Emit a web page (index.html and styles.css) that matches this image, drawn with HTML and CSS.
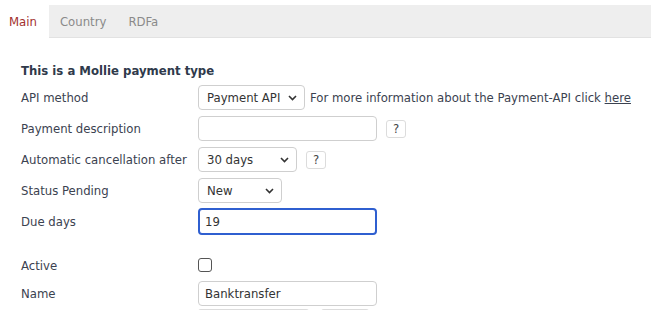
FILE: index.html
```html
<!DOCTYPE html>
<html lang="en">
<head>
  <meta charset="UTF-8" />
  <title>Payment type</title>
  <link rel="stylesheet" href="styles.css">
</head>
<body>

  <ul class="tabs">
    <li class="tab active">Main</li>
    <li class="tab">Country</li>
    <li class="tab">RDFa</li>
  </ul>

  <form class="form">
    <h4>This is a Mollie payment type</h4>

    <div class="row">
      <label>API method</label>
      <div class="field">
        <span class="select w-api">Payment API
          <svg class="chev" width="9" height="6" viewBox="0 0 9 6"><path d="M1 1l3.5 3.5L8 1" fill="none" stroke="#333" stroke-width="1.6"/></svg>
        </span>
        <span class="note">For more information about the Payment-API click <a href="#">here</a></span>
      </div>
    </div>

    <div class="row">
      <label>Payment description</label>
      <div class="field">
        <input class="text" type="text" value="">
        <button type="button" class="help">?</button>
      </div>
    </div>

    <div class="row">
      <label>Automatic cancellation after</label>
      <div class="field">
        <span class="select w-days">30 days
          <svg class="chev" width="9" height="6" viewBox="0 0 9 6"><path d="M1 1l3.5 3.5L8 1" fill="none" stroke="#333" stroke-width="1.6"/></svg>
        </span>
        <button type="button" class="help">?</button>
      </div>
    </div>

    <div class="row">
      <label>Status Pending</label>
      <div class="field">
        <span class="select w-new">New
          <svg class="chev" width="9" height="6" viewBox="0 0 9 6"><path d="M1 1l3.5 3.5L8 1" fill="none" stroke="#333" stroke-width="1.6"/></svg>
        </span>
      </div>
    </div>

    <div class="row">
      <label>Due days</label>
      <div class="field">
        <input class="text focus" type="text" value="19">
      </div>
    </div>

    <div class="row gap">
      <label>Active</label>
      <div class="field">
        <span class="check"></span>
      </div>
    </div>

    <div class="row">
      <label>Name</label>
      <div class="field">
        <input class="text" type="text" value="Banktransfer">
      </div>
    </div>

    <div class="row last">
      <label></label>
      <div class="field">
        <span class="stub"></span>
        <span class="stub short"></span>
      </div>
    </div>
  </form>

</body>
</html>
```

FILE: styles.css
```css
html, body {
  height: 310px;
}

body {
  margin: 0;
  font-family: "DejaVu Sans Condensed", "DejaVu Sans", sans-serif;
  font-size: 13px;
  color: #3b4250;
  background: #fff;
  overflow: hidden;
}

.tabs {
  list-style: none;
  margin: 5px 0 0;
  padding: 0;
  display: flex;
  height: 32px;
  background: #eeeeee;
  border-bottom: 1px solid #e2e2e2;
}

.tab {
  padding: 0 11px;
  line-height: 34px;
  color: #8a8a8a;
}

.tab.active {
  background: #fff;
  color: #a2302e;
  padding: 0 12px 0 9px;
  margin-bottom: -1px;
}

.form {
  padding: 0 0 0 21px;
  margin-top: 25px;
}

h4 {
  margin: 0 0 4px;
  font-size: 13px;
  font-weight: bold;
  color: #2f3a4b;
  line-height: 15px;
}

.row {
  display: flex;
  align-items: center;
  height: 31px;
}

.row.gap {
  margin-top: 15px;
  height: 26px;
}

label {
  width: 177px;
  flex: none;
}

.field {
  display: flex;
  align-items: center;
}

.select {
  position: relative;
  box-sizing: border-box;
  height: 25px;
  line-height: 23px;
  padding: 0 0 0 8px;
  border: 1px solid #cfcfcf;
  border-radius: 4px;
  background: #fff;
  color: #333;
}

.chev {
  position: absolute;
  right: 7px;
  top: 9px;
}

.w-api { width: 107px; }
.w-days { width: 99px; }
.w-new { width: 84px; }

.note {
  margin-left: 5px;
  color: #3b4250;
}

.note a {
  color: #3b4250;
}

.text {
  box-sizing: border-box;
  width: 179px;
  height: 25px;
  margin: 0;
  padding: 0 6px;
  border: 1px solid #cfcfcf;
  border-radius: 4px;
  font: inherit;
  color: #333;
  outline: none;
}

.text.focus {
  border: 2px solid #2f5fd0;
  height: 27px;
  padding: 0 5px;
}

.help {
  box-sizing: border-box;
  width: 20px;
  height: 18px;
  margin-left: 9px;
  padding: 0;
  border: 1px solid #dcdcdc;
  border-radius: 3px;
  background: #fff;
  font: inherit;
  font-size: 13px;
  color: #444;
}

.check {
  display: inline-block;
  box-sizing: border-box;
  width: 14px;
  height: 14px;
  border: 1px solid #555;
  border-radius: 3px;
}

.row.last {
  height: 3px;
  align-items: flex-start;
}

.stub {
  display: inline-block;
  box-sizing: border-box;
  width: 111px;
  height: 3px;
  border: 1px solid #dcdcdc;
  border-bottom: none;
  border-radius: 4px 4px 0 0;
}

.stub.short {
  width: 48px;
  margin-left: 12px;
}
```
